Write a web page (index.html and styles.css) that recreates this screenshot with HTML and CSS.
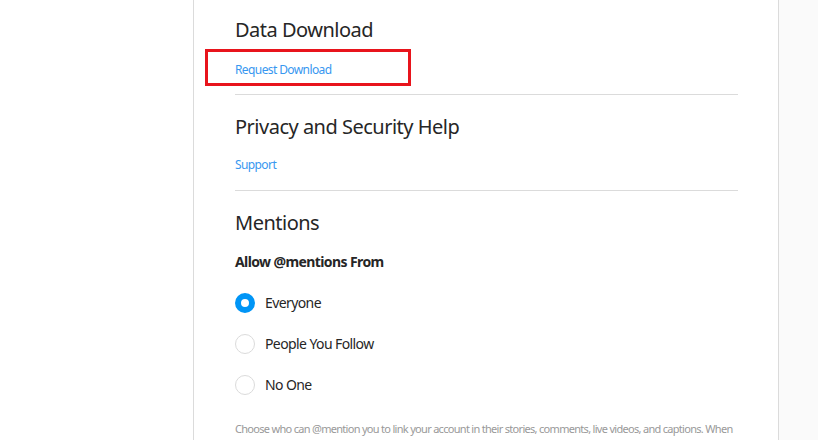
FILE: index.html
```html
<!DOCTYPE html>
<html>
<head>
<meta charset="utf-8">
<link rel="stylesheet" href="styles.css">
</head>
<body>
<div class="page">
  <div class="gutter"></div>
  <main class="panel">
    <section class="section first">
      <h2 class="heading">Data Download</h2>
      <div class="link-row highlight"><a class="link" href="#">Request Download</a></div>
    </section>
    <section class="section">
      <h2 class="heading">Privacy and Security Help</h2>
      <div class="link-row"><a class="link" href="#">Support</a></div>
    </section>
    <section class="section last">
      <h2 class="heading">Mentions</h2>
      <h3 class="subheading">Allow @mentions From</h3>
      <div class="options">
        <label class="option"><span class="radio checked"></span><span class="option-label">Everyone</span></label>
        <label class="option"><span class="radio"></span><span class="option-label">People You Follow</span></label>
        <label class="option"><span class="radio"></span><span class="option-label">No One</span></label>
      </div>
      <p class="note">Choose who can @mention you to link your account in their stories, comments, live videos, and captions. When people try to @mention you, they'll see if you don't allow @mentions.</p>
    </section>
  </main>
  <div class="aside"></div>
</div>
</body>
</html>
```
FILE: styles.css
```css
html, body {
  margin: 0;
  padding: 0;
  height: 100%;
  overflow: hidden;
  background: #fff;
  font-family: "Noto Sans", "Open Sans", sans-serif;
  color: #262626;
}
.page {
  display: flex;
  height: 440px;
}
.gutter {
  width: 193px;
  flex: none;
}
.panel {
  width: 503px;
  flex: none;
  border-left: 1px solid #dbdbdb;
  border-right: 1px solid #dbdbdb;
  padding: 0 40px 0 41px;
}
.aside {
  flex: 1;
  background: #fafafa;
}
.section {
  border-bottom: 1px solid #dbdbdb;
  padding-top: 18px;
  padding-bottom: 16px;
}
.section.first {
  padding-top: 16px;
  padding-bottom: 15px;
}
.section.last {
  border-bottom: none;
}
.heading {
  margin: 0;
  font-size: 20px;
  letter-spacing: -0.5px;
  font-weight: 400;
  line-height: 28px;
}
.link-row {
  position: relative;
  margin-top: 13px;
  line-height: 18px;
}
.link-row.highlight {
  margin-top: 15px;
}
.highlight::before {
  content: "";
  position: absolute;
  left: -30px;
  top: -10px;
  width: 200px;
  height: 31px;
  border: 3px solid #e8141c;
}
.link {
  font-size: 12px;
  letter-spacing: -0.6px;
  color: #3897f0;
  text-decoration: none;
}
.subheading {
  margin: 16px 0 0;
  font-size: 14px;
  letter-spacing: -0.6px;
  font-weight: 700;
  line-height: 18px;
}
.options {
  display: flex;
  flex-direction: column;
  gap: 21px;
  margin-top: 22px;
}
.option {
  display: flex;
  align-items: center;
  gap: 10px;
  font-size: 14px;
  letter-spacing: -0.6px;
  line-height: 20px;
}
.radio {
  box-sizing: border-box;
  width: 20px;
  height: 20px;
  border-radius: 50%;
  border: 1px solid #dbdbdb;
  flex: none;
}
.radio.checked {
  border: 6px solid #0095f6;
  background: #fff;
}
.note {
  margin: 26px 0 0;
  font-size: 11px;
  letter-spacing: -0.7px;
  line-height: 16px;
  color: #999;
}
```
